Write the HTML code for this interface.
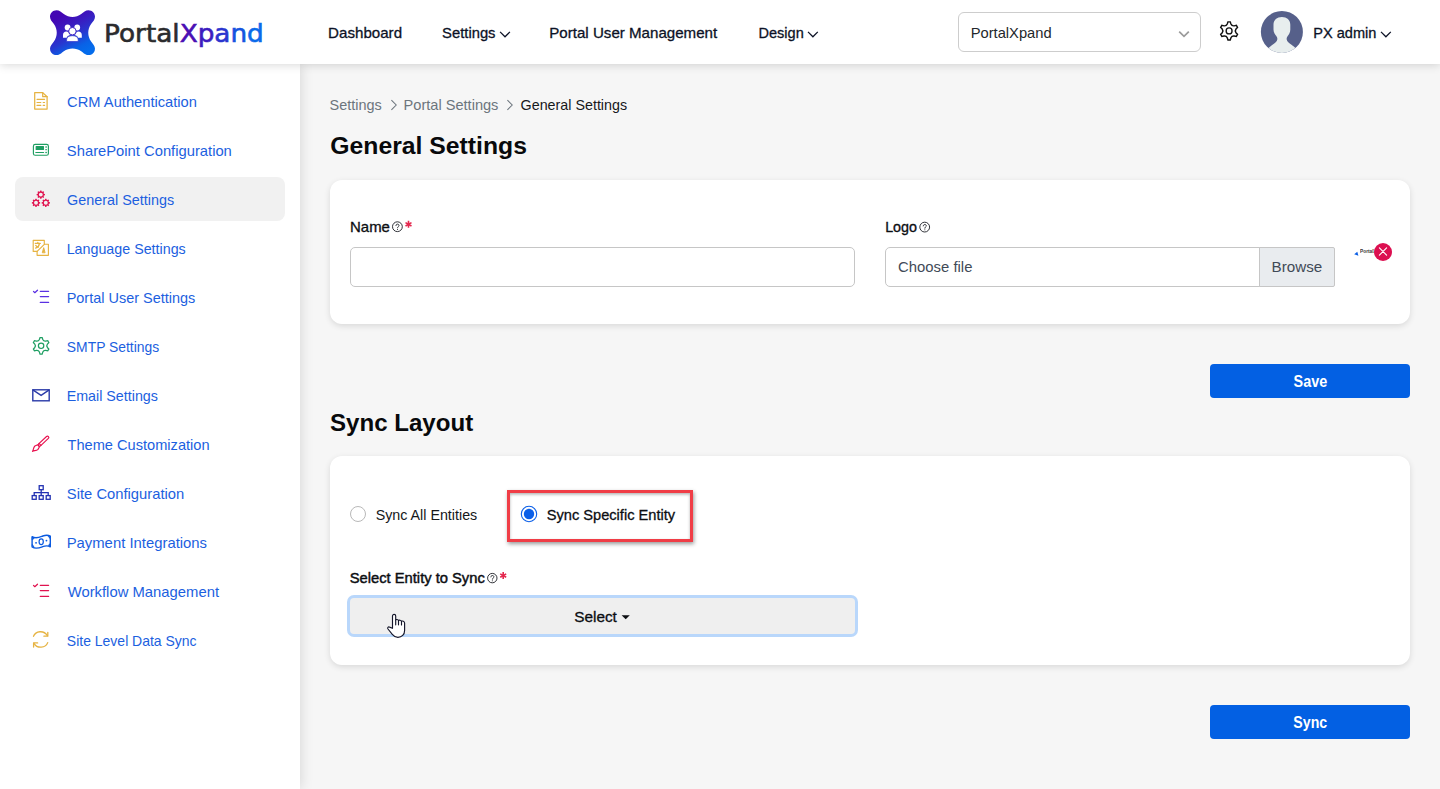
<!DOCTYPE html>
<html lang="en">
<head>
<meta charset="utf-8">
<title>General Settings - PortalXpand</title>
<style>
*{box-sizing:border-box;margin:0;padding:0}
html,body{width:1440px;height:789px;overflow:hidden}
body{font-family:"Liberation Sans","DejaVu Sans",sans-serif;background:#f6f6f6;color:#111;position:relative}
.abs{position:absolute}
.t{position:absolute;white-space:nowrap;line-height:20px;height:20px;transform-origin:0 50%;z-index:10}
#hdr{position:absolute;left:0;top:0;width:1440px;height:64px;background:#fff;box-shadow:0 1px 9px rgba(0,0,0,.16);z-index:5}
#side{position:absolute;left:0;top:64px;width:300px;height:725px;background:#fff;box-shadow:1px 0 12px rgba(0,0,0,.13);z-index:3}
#active{position:absolute;left:15px;top:177px;width:270px;height:44px;background:#f1f1f1;border-radius:8px;z-index:4}
#icons{position:absolute;left:0;top:0;z-index:6}
.card{position:absolute;left:330px;width:1080px;background:#fff;border-radius:12px;box-shadow:0 2px 6px rgba(0,0,0,.12)}
.btn{position:absolute;left:1210px;width:200px;height:34px;background:#0360e3;border-radius:4px}
.inp{position:absolute;height:40px;background:#fff;border:1px solid #c6c6c6;border-radius:5px}
</style>
</head>
<body>

<div id="hdr"></div>
<div id="side"></div>
<div id="active"></div>

<!-- logo mark -->
<svg class="abs" style="left:50px;top:9.600px;z-index:7" width="45" height="45.400" viewBox="0 0 45 45">
  <defs><linearGradient id="lg" x1="0.3" y1="0.1" x2="0.75" y2="0.95"><stop offset="0" stop-color="#4406b3"/><stop offset="0.3" stop-color="#3a1cc0"/><stop offset="0.56" stop-color="#2836cf"/><stop offset="0.82" stop-color="#0962e6"/><stop offset="1" stop-color="#046cec"/></linearGradient></defs>
  <path d="M6.500 0 C9.500 0 11.500 2.200 13.800 3.900 C19 7.700 26 7.700 31.200 3.900 C33.500 2.200 35.500 0 38.500 0 C42.100 0 45 2.900 45 6.500 C45 9.500 42.800 11.500 41.100 13.800 C37.300 19 37.300 26 41.100 31.200 C42.800 33.500 45 35.500 45 38.500 C45 42.100 42.100 45 38.500 45 C35.500 45 33.500 42.800 31.200 41.100 C26 37.300 19 37.300 13.800 41.100 C11.500 42.800 9.500 45 6.500 45 C2.900 45 0 42.100 0 38.500 C0 35.500 2.200 33.500 3.900 31.200 C7.700 26 7.700 19 3.900 13.800 C2.200 11.500 0 9.500 0 6.500 C0 2.900 2.900 0 6.500 0 Z" fill="url(#lg)"/>
  <g fill="#fff">
    <circle cx="17.600" cy="17.300" r="2.900"/><circle cx="27.200" cy="17.300" r="2.900"/>
    <path d="M13 27.600 V24.800 C13 22.700 14.400 21.400 16.300 21.400 C17.100 21.400 17.700 21.600 18.200 21.900 C18.600 23.300 19.300 24.300 20.300 24.900 C18.200 25.300 17.100 26.300 16.700 27.600 Z"/>
    <path d="M31.800 27.600 V24.800 C31.800 22.700 30.400 21.400 28.500 21.400 C27.700 21.400 27.100 21.600 26.600 21.900 C26.200 23.300 25.500 24.300 24.500 24.900 C26.600 25.300 27.700 26.300 28.100 27.600 Z"/>
    <circle cx="22.400" cy="21" r="3.700" stroke="#3a1cc2" stroke-width="0.900"/>
    <path d="M16.600 31.300 V29.600 C16.600 26.900 18.900 25.500 22.400 25.500 C25.900 25.500 28.200 26.900 28.200 29.600 V31.300 Z" stroke="#2d34cc" stroke-width="0.700"/>
  </g>
</svg>
<div class="t" id="logo" style="left:104px;top:15.700px;height:36px;line-height:36px;font-size:25.200px;font-family:'DejaVu Sans','Liberation Sans',sans-serif;color:#2b2b2d;transform:translateX(0.11px) scaleX(1.0435);-webkit-text-stroke:.6px currentColor"><span>Portal</span><span style="color:#4a0fb4">X</span><span style="color:#3d1cc0">p</span><span style="color:#2b35cf">a</span><span style="color:#1554e0">n</span><span style="color:#0a6aea">d</span></div>

<!-- header widgets -->
<svg class="abs" style="left:0;top:0;z-index:7" width="1440" height="64" viewBox="0 0 1440 64">
  <g fill="none" stroke="#0c1226" stroke-width="1.250">
    <path d="M500.100 31.900 L505 36.800 L509.900 31.900"/>
    <path d="M808 31.900 L812.900 36.800 L817.800 31.900"/>
    <path d="M1381 31.900 L1385.900 36.800 L1390.800 31.900"/>
  </g>
  <rect x="958.500" y="12.500" width="242" height="39" rx="5.500" fill="#fff" stroke="#cdcdcd"/>
  <path d="M1179.200 31.600 L1184 36.400 L1188.800 31.600" fill="none" stroke="#9b9b9b" stroke-width="1.700"/>
  <path d="M1227.25 24.00 L1227.95 21.85 L1230.25 21.85 L1230.95 24.00 Q1231.85 26.14 1234.15 25.85 L1236.36 25.38 L1237.51 27.37 L1236.00 29.05 Q1234.60 30.90 1236.00 32.75 L1237.51 34.43 L1236.36 36.42 L1234.15 35.95 Q1231.85 35.66 1230.95 37.80 L1230.25 39.95 L1227.95 39.95 L1227.25 37.80 Q1226.35 35.66 1224.05 35.95 L1221.84 36.42 L1220.69 34.43 L1222.20 32.75 Q1223.60 30.90 1222.20 29.05 L1220.69 27.37 L1221.84 25.38 L1224.05 25.85 Q1226.35 26.14 1227.25 24.00Z" fill="none" stroke="#111" stroke-width="1.450" stroke-linejoin="miter"/>
  <circle cx="1229.100" cy="30.900" r="2.950" fill="none" stroke="#111" stroke-width="1.350"/>
  <defs><clipPath id="av"><circle cx="1281.900" cy="31.900" r="21"/></clipPath></defs>
  <circle cx="1281.900" cy="31.900" r="21" fill="#56608a"/>
  <g clip-path="url(#av)" fill="#e8eeee">
    <path d="M1281.900 16.900 C1277 16.900 1273.500 19.800 1273.500 24.800 V29.500 C1273.500 32.500 1275 34.500 1276.300 36 C1277.300 37.200 1277.500 38.500 1277.300 39.500 C1277 41.500 1275 43 1272.500 44.800 C1270.800 46 1269.500 47 1268 48.500 V56 H1296 V48.500 C1294.500 47 1293.200 46 1291.500 44.800 C1289 43 1287 41.500 1286.700 39.500 C1286.500 38.500 1286.700 37.200 1287.700 36 C1289 34.500 1290.300 32.500 1290.300 29.500 V24.800 C1290.300 19.800 1286.800 16.900 1281.900 16.900 Z"/>
  </g>
</svg>

<!-- sidebar icons -->
<svg id="icons" width="300" height="789" viewBox="0 0 300 789" fill="none" stroke-linecap="round" stroke-linejoin="round">
  <!-- doc -->
  <g stroke="#e6b342" stroke-width="1.250">
    <path d="M34.700 92.600 H42.700 L47.100 96.700 V109.100 H34.700 Z"/><path d="M42.700 92.600 V96.700 H47.100"/>
    <path d="M37 99.300 H44.600 M37 102.500 H40.800 M43.200 102.500 H44.600 M37 105.400 H40.800 M43.200 105.400 H44.600" stroke-width="1.150"/>
  </g>
  <!-- sharepoint -->
  <g stroke="#1e9e62" stroke-width="1.150">
    <rect x="33.400" y="144.400" width="15" height="10.900" rx="1.800"/>
    <rect x="36.200" y="146.600" width="7.200" height="2.800" fill="#1e9e62"/>
    <path d="M35.800 152.500 H43.600"/>
    <path d="M45.900 147 H46.300 M45.900 149.700 H46.300 M45.900 152.500 H46.300" stroke-width="1.300"/>
  </g>
  <!-- gears -->
  <path d="M43.83 193.75 L44.95 194.00 L44.95 195.20 L43.83 195.45 A3.15 3.15 0 0 1 43.55 196.14 L44.16 197.11 L43.31 197.96 L42.34 197.35 A3.15 3.15 0 0 1 41.65 197.63 L41.40 198.75 L40.20 198.75 L39.95 197.63 A3.15 3.15 0 0 1 39.26 197.35 L38.29 197.96 L37.44 197.11 L38.05 196.14 A3.15 3.15 0 0 1 37.77 195.45 L36.65 195.20 L36.65 194.00 L37.77 193.75 A3.15 3.15 0 0 1 38.05 193.06 L37.44 192.09 L38.29 191.24 L39.26 191.85 A3.15 3.15 0 0 1 39.95 191.57 L40.20 190.45 L41.40 190.45 L41.65 191.57 A3.15 3.15 0 0 1 42.34 191.85 L43.31 191.24 L44.16 192.09 L43.55 193.06 A3.15 3.15 0 0 1 43.83 193.75 Z M38.85 194.60 a1.95 1.95 0 1 0 3.90 0 a1.95 1.95 0 1 0 -3.90 0Z M39.03 201.95 L40.15 202.20 L40.15 203.40 L39.03 203.65 A3.15 3.15 0 0 1 38.75 204.34 L39.36 205.31 L38.51 206.16 L37.54 205.55 A3.15 3.15 0 0 1 36.85 205.83 L36.60 206.95 L35.40 206.95 L35.15 205.83 A3.15 3.15 0 0 1 34.46 205.55 L33.49 206.16 L32.64 205.31 L33.25 204.34 A3.15 3.15 0 0 1 32.97 203.65 L31.85 203.40 L31.85 202.20 L32.97 201.95 A3.15 3.15 0 0 1 33.25 201.26 L32.64 200.29 L33.49 199.44 L34.46 200.05 A3.15 3.15 0 0 1 35.15 199.77 L35.40 198.65 L36.60 198.65 L36.85 199.77 A3.15 3.15 0 0 1 37.54 200.05 L38.51 199.44 L39.36 200.29 L38.75 201.26 A3.15 3.15 0 0 1 39.03 201.95 Z M34.05 202.80 a1.95 1.95 0 1 0 3.90 0 a1.95 1.95 0 1 0 -3.90 0Z M48.83 201.95 L49.95 202.20 L49.95 203.40 L48.83 203.65 A3.15 3.15 0 0 1 48.55 204.34 L49.16 205.31 L48.31 206.16 L47.34 205.55 A3.15 3.15 0 0 1 46.65 205.83 L46.40 206.95 L45.20 206.95 L44.95 205.83 A3.15 3.15 0 0 1 44.26 205.55 L43.29 206.16 L42.44 205.31 L43.05 204.34 A3.15 3.15 0 0 1 42.77 203.65 L41.65 203.40 L41.65 202.20 L42.77 201.95 A3.15 3.15 0 0 1 43.05 201.26 L42.44 200.29 L43.29 199.44 L44.26 200.05 A3.15 3.15 0 0 1 44.95 199.77 L45.20 198.65 L46.40 198.65 L46.65 199.77 A3.15 3.15 0 0 1 47.34 200.05 L48.31 199.44 L49.16 200.29 L48.55 201.26 A3.15 3.15 0 0 1 48.83 201.95 Z M43.85 202.80 a1.95 1.95 0 1 0 3.90 0 a1.95 1.95 0 1 0 -3.90 0Z" fill="#e0134f" fill-rule="evenodd" stroke="none"/>
  <!-- language -->
  <g stroke="#e6b342" stroke-width="1.150">
    <path d="M44.300 244 V240.300 H33.200 V251.400 H37.100"/>
    <path d="M44.600 244.200 H48.400 V255.300 H37.100 V251.400 Z"/>
    <path d="M35.300 243.400 H40.300 M37.800 242.300 V243.400 M39.400 243.600 C39.100 246 37.700 247.500 35.600 248.100 M35.700 245.400 C36.300 246.300 37.300 246.900 38.400 247.100" stroke-width="1.250"/>
    <path d="M42.400 252.400 L43.700 247.700 L45 252.400 Z" fill="#e6b342" stroke-width="1"/>
  </g>
  <!-- checklist violet -->
  <g stroke="#5a30e2" stroke-width="1.250">
    <path d="M40.300 291.300 H48.600 M40.300 296.600 H48.600 M40.300 302.400 H48.600"/>
    <path d="M33.500 291.400 L34.800 292.700 L37.500 290.200"/>
  </g>
  <!-- gear green -->
  <path d="M39.40 339.50 L40.05 337.50 L42.15 337.50 L42.80 339.50 Q43.62 341.43 45.71 341.18 L47.76 340.74 L48.81 342.56 L47.41 344.12 Q46.15 345.80 47.41 347.48 L48.81 349.04 L47.76 350.86 L45.71 350.42 Q43.62 350.17 42.80 352.10 L42.15 354.10 L40.05 354.10 L39.40 352.10 Q38.58 350.17 36.49 350.42 L34.44 350.86 L33.39 349.04 L34.79 347.48 Q36.05 345.80 34.79 344.12 L33.39 342.56 L34.44 340.74 L36.49 341.18 Q38.58 341.43 39.40 339.50Z" stroke="#1e9e62" stroke-width="1.250" stroke-linejoin="miter"/>
  <circle cx="41.100" cy="345.800" r="2.700" stroke="#1e9e62" stroke-width="1.200"/>
  <!-- email -->
  <g stroke="#2a3aa8" stroke-width="1.400" stroke-linejoin="miter">
    <rect x="32.800" y="389.800" width="16.400" height="11"/>
    <path d="M33.200 390.200 L41.100 395.300 L48.800 390.200"/>
  </g>
  <!-- brush -->
  <g stroke="#e8104e" stroke-width="1.150" transform="translate(32.500 451.400) rotate(-43)">
    <rect x="8.300" y="-1.350" width="13.500" height="2.700" rx="1.350"/>
    <path d="M10.200 -1.350 V1.350"/>
    <path d="M0 0 C2 -.3 2.800 -2.300 5.400 -2.300 L8.300 -1.350 V1.350 L5.400 2.300 C2.800 2.300 2 .3 0 0 Z"/>
  </g>
  <!-- sitemap -->
  <g stroke="#2231b2" stroke-width="1.300" stroke-linejoin="miter" stroke-linecap="butt">
    <rect x="39.200" y="485.700" width="4" height="4"/>
    <rect x="32.200" y="495.600" width="4" height="3.700"/><rect x="39.200" y="495.600" width="4" height="3.700"/><rect x="46.200" y="495.600" width="4" height="3.700"/>
    <path d="M41.200 489.700 V495.600 M34.200 495.600 V492.600 H48.200 V495.600"/>
  </g>
  <!-- money -->
  <g stroke="#0a5ae0" stroke-width="1.400">
    <path d="M32.100 536.700 C36 539.200 39.500 537.300 42.800 536 C45.800 534.900 48.400 535 50.300 536.200 V546.800 C48.200 545.600 45.600 545.500 42.600 546.700 C39.200 548 35.800 549.400 32.100 547 Z"/>
    <ellipse cx="41.200" cy="541.700" rx="2.100" ry="2.800" stroke-width="1.250"/>
    <path d="M36 542.800 H36.100 M46.400 540.600 H46.500" stroke-width="1.700"/>
    <path d="M32.500 537.500 L34.300 538.300 L32.500 539.600 Z M50 536.800 L48.200 536.300 L50 538.400 Z M32.500 546.300 L34.200 547.300 L32.500 544.700 Z M50 546 L48.400 545.300 L50 543.800Z" fill="#0a5ae0" stroke-width=".8"/>
  </g>
  <!-- checklist crimson -->
  <g stroke="#e0134f" stroke-width="1.250">
    <path d="M40.300 585.300 H48.600 M40.300 590.600 H48.600 M40.300 596.400 H48.600"/>
    <path d="M33.500 585.400 L34.800 586.700 L37.500 584.200"/>
  </g>
  <!-- sync -->
  <g stroke="#e6b342" stroke-width="1.300">
    <path d="M33.500 636.300 C35.600 630.700 44 630 47.400 635.700"/><path d="M47.800 632.300 V636.200 H43.900"/>
    <path d="M47.700 642.600 C45.600 648.300 37.200 648.900 33.900 643.300"/><path d="M33.600 647.100 V642.900 H37.600"/>
  </g>
</svg>

<!-- MAIN -->
<svg class="abs" style="left:0;top:0;z-index:2" width="1440" height="789" viewBox="0 0 1440 789" fill="none">
  <path d="M391.400 100.200 L396.200 105 L391.400 109.800 M507.400 100.200 L512.200 105 L507.400 109.800" stroke="#6c757d" stroke-width="1.050"/>
</svg>

<div class="card" style="top:180px;height:144px"></div>
<div class="inp" style="left:350px;top:247px;width:505px"></div>
<div class="inp" style="left:885px;top:247px;width:450px"></div>
<div class="abs" style="left:1259px;top:247px;width:76px;height:40px;background:#e9ecef;border:1px solid #c6c6c6;border-radius:0 2px 2px 0"></div>

<!-- help icons + asterisks -->
<svg class="abs" style="left:0;top:0;z-index:9" width="1440" height="789" viewBox="0 0 1440 789" fill="none">
  <g stroke="#1a1c22" stroke-width=".9">
    <circle cx="397.400" cy="226.700" r="4.900"/><circle cx="924.700" cy="227.100" r="4.900"/><circle cx="492.300" cy="578.100" r="4.700"/>
  </g>
  <g stroke="#1a1c22" stroke-width=".9" stroke-linecap="round">
    <path d="M395.900 225.500 C395.900 223.600 399 223.600 399 225.500 C399 226.600 397.500 226.600 397.500 227.800 M397.500 229.400 V229.500"/>
    <path d="M923.200 225.900 C923.200 224 926.300 224 926.300 225.900 C926.300 227 924.800 227 924.800 228.200 M924.800 229.800 V229.900"/>
    <path d="M490.800 576.900 C490.800 575 493.900 575 493.900 576.900 C493.900 578 492.400 578 492.400 579.200 M492.400 580.800 V580.900"/>
  </g>
  <g stroke="#e4284e" stroke-width="1.600" stroke-linecap="butt">
    <path d="M408.500 220.800 V227.800 M405.500 222.600 L411.500 226 M411.500 222.600 L405.500 226"/>
    <path d="M503.200 572.100 V579.100 M500.200 573.900 L506.200 577.300 M506.200 573.900 L500.200 577.300"/>
  </g>
  <!-- thumbnail -->
  <path d="M1354.200 254.300 L1357.300 251.800 L1358.400 255.700 Z" fill="#0b5fe6"/>
  <circle cx="1383" cy="252" r="9" fill="#dc0f50"/>
  <path d="M1379.400 247.900 L1386.600 255.100 M1386.600 247.900 L1379.400 255.100" stroke="#fff" stroke-width="1.150" stroke-linecap="round"/>
</svg>
<div class="abs" style="left:1360px;top:249.200px;font-size:4.800px;line-height:6px;color:#3a3a3a;z-index:8;width:14px;overflow:hidden;white-space:nowrap;font-weight:700">PortalXpand</div>

<div class="btn" style="top:364px"></div>

<div class="card" style="top:456px;height:209px"></div>

<!-- radios -->
<div class="abs" style="left:350px;top:506px;width:16px;height:16px;border:1px solid #b9b9b9;border-radius:50%;background:#fff"></div>
<div class="abs" style="left:507px;top:490px;width:186px;height:52px;border:3px solid #f03d46;box-shadow:1px 2px 4px rgba(0,0,0,.4),inset 0 1.500px 3px rgba(0,0,0,.3);background:#fff"></div>
<svg class="abs" style="left:519px;top:504px;z-index:9" width="20" height="20" viewBox="0 0 20 20"><circle cx="10" cy="10" r="7.700" fill="#fff" stroke="#0b5fe8" stroke-width="1.100"/><circle cx="10" cy="10" r="5.200" fill="#0b5fe8"/></svg>

<!-- select button -->
<div class="abs" style="left:347px;top:595px;width:511px;height:42px;border-radius:7px;background:#b9d7fb"></div>
<div class="abs" style="left:350px;top:598px;width:505px;height:36px;border-radius:4px;background:#efefef"></div>
<svg class="abs" style="left:0;top:0;z-index:11" width="1440" height="789" viewBox="0 0 1440 789" fill="none">
  <path d="M621.600 615.200 H629.800 L625.700 619.300 Z" fill="#0c0e12"/>
  <g transform="translate(387 614)" stroke="#14162a" stroke-width="1.150" stroke-linejoin="round" stroke-linecap="round">
    <path d="M5.500 14.300 V2 A1.600 1.600 0 0 1 8.700 2 V6 C9.300 5.300 10.900 5.300 11.500 6.500 C12.200 5.900 13.900 6.100 14.500 7.200 C15.300 6.700 17.500 7 17.600 9 V16.400 C17.600 20.500 14.800 23.400 10.900 23.400 C8.400 23.400 6.800 22.300 5.300 20.400 L1 15 C.1 13.800 1.300 12.500 2.500 13.100 Z" fill="#fff"/>
    <path d="M8.700 6 V10.800 M11.500 6.500 V10.800 M14.500 7.200 V11"/>
  </g>
</svg>

<div class="btn" style="top:705px"></div>

<div class="t" id="nav1" style="left:328px;top:22.60px;font-size:15.0px;font-weight:400;color:#0c1226;transform:translateX(0.11px) scaleX(1.0076);-webkit-text-stroke:.3px #0c1226">Dashboard</div>
<div class="t" id="nav2" style="left:442px;top:22.60px;font-size:15.0px;font-weight:400;color:#0c1226;transform:translateX(0.10px) scaleX(0.9854);-webkit-text-stroke:.3px #0c1226">Settings</div>
<div class="t" id="nav3" style="left:549px;top:22.60px;font-size:15.0px;font-weight:400;color:#0c1226;transform:translateX(0.25px) scaleX(1.0072);-webkit-text-stroke:.3px #0c1226">Portal User Management</div>
<div class="t" id="nav4" style="left:758px;top:22.60px;font-size:15.0px;font-weight:400;color:#0c1226;transform:translateX(0.49px) scaleX(0.9695);-webkit-text-stroke:.3px #0c1226">Design</div>
<div class="t" id="sel" style="left:970px;top:22.80px;font-size:15.0px;font-weight:400;color:#23272b;transform:translateX(0.70px) scaleX(0.9800);">PortalXpand</div>
<div class="t" id="usr" style="left:1313px;top:22.60px;font-size:15.0px;font-weight:400;color:#0c1226;transform:translateX(0.31px) scaleX(0.9694);-webkit-text-stroke:.3px #0c1226">PX admin</div>
<div class="t" id="bc1" style="left:329px;top:94.70px;font-size:15.0px;font-weight:400;color:#6c757d;transform:translateX(0.59px) scaleX(0.9633);">Settings</div>
<div class="t" id="bc2" style="left:403px;top:94.70px;font-size:15.0px;font-weight:400;color:#6c757d;transform:translateX(0.55px) scaleX(0.9722);">Portal Settings</div>
<div class="t" id="bc3" style="left:520px;top:94.70px;font-size:15.0px;font-weight:400;color:#16181b;transform:translateX(0.60px) scaleX(0.9530);">General Settings</div>
<div class="t" id="h1" style="left:330px;top:136.03px;font-size:23.0px;font-weight:700;color:#08090b;transform:translateX(0.36px) scaleX(1.0753);">General Settings</div>
<div class="t" id="lname" style="left:350px;top:216.90px;font-size:15.0px;font-weight:400;color:#0c0e12;transform:translateX(0.08px) scaleX(0.9959);-webkit-text-stroke:.33px #0c0e12">Name</div>
<div class="t" id="llogo" style="left:885px;top:216.90px;font-size:15.0px;font-weight:400;color:#0c0e12;transform:translateX(0.13px) scaleX(0.9555);-webkit-text-stroke:.33px #0c0e12">Logo</div>
<div class="t" id="cf" style="left:898px;top:256.90px;font-size:15.0px;font-weight:400;color:#414a57;transform:translateX(0.10px) scaleX(0.9900);">Choose file</div>
<div class="t" id="br" style="left:1271px;top:257.00px;font-size:15.0px;font-weight:400;color:#414a57;transform:translateX(0.60px) scaleX(1.0124);">Browse</div>
<div class="t" id="save" style="left:1293px;top:371.66px;font-size:16.0px;font-weight:700;color:#ffffff;transform:translateX(0.62px) scaleX(0.8992);">Save</div>
<div class="t" id="h2" style="left:330px;top:412.63px;font-size:23.0px;font-weight:700;color:#08090b;transform:translateX(0.06px) scaleX(1.0465);">Sync Layout</div>
<div class="t" id="r1" style="left:375px;top:504.80px;font-size:15.0px;font-weight:400;color:#15171a;transform:translateX(0.63px) scaleX(0.9519);">Sync All Entities</div>
<div class="t" id="r2" style="left:546px;top:504.80px;font-size:15.0px;font-weight:400;color:#0c0e12;transform:translateX(0.72px) scaleX(0.9746);-webkit-text-stroke:.3px #0c0e12">Sync Specific Entity</div>
<div class="t" id="lsel" style="left:349px;top:567.70px;font-size:15.0px;font-weight:400;color:#0c0e12;transform:translateX(0.80px) scaleX(0.9810);-webkit-text-stroke:.45px #0c0e12">Select Entity to Sync</div>
<div class="t" id="selbtn" style="left:574px;top:607.30px;font-size:15.0px;font-weight:400;color:#0c0e12;transform:translateX(0.22px) scaleX(1.0221);-webkit-text-stroke:.3px #0c0e12">Select</div>
<div class="t" id="sync" style="left:1293px;top:712.66px;font-size:16.0px;font-weight:700;color:#ffffff;transform:translateX(0.31px) scaleX(0.8861);">Sync</div>
<div class="t" id="s0" style="left:67px;top:91.80px;font-size:15.0px;font-weight:400;color:#1c5fe0;transform:translateX(0.08px) scaleX(0.9798);">CRM Authentication</div>
<div class="t" id="s1" style="left:66px;top:140.80px;font-size:15.0px;font-weight:400;color:#1c5fe0;transform:translateX(0.86px) scaleX(0.9843);">SharePoint Configuration</div>
<div class="t" id="s2" style="left:67px;top:189.80px;font-size:15.0px;font-weight:400;color:#1c5fe0;transform:translateX(0.10px) scaleX(0.9575);">General Settings</div>
<div class="t" id="s3" style="left:66px;top:238.80px;font-size:15.0px;font-weight:400;color:#1c5fe0;transform:translateX(0.64px) scaleX(0.9520);">Language Settings</div>
<div class="t" id="s4" style="left:66px;top:287.80px;font-size:15.0px;font-weight:400;color:#1c5fe0;transform:translateX(0.68px) scaleX(0.9639);">Portal User Settings</div>
<div class="t" id="s5" style="left:66px;top:336.80px;font-size:15.0px;font-weight:400;color:#1c5fe0;transform:translateX(0.84px) scaleX(0.9255);">SMTP Settings</div>
<div class="t" id="s6" style="left:66px;top:385.80px;font-size:15.0px;font-weight:400;color:#1c5fe0;transform:translateX(0.64px) scaleX(0.9520);">Email Settings</div>
<div class="t" id="s7" style="left:67px;top:434.80px;font-size:15.0px;font-weight:400;color:#1c5fe0;transform:translateX(0.52px) scaleX(0.9737);">Theme Customization</div>
<div class="t" id="s8" style="left:66px;top:483.80px;font-size:15.0px;font-weight:400;color:#1c5fe0;transform:translateX(0.82px) scaleX(0.9848);">Site Configuration</div>
<div class="t" id="s9" style="left:66px;top:532.80px;font-size:15.0px;font-weight:400;color:#1c5fe0;transform:translateX(0.63px) scaleX(0.9906);">Payment Integrations</div>
<div class="t" id="s10" style="left:67px;top:581.80px;font-size:15.0px;font-weight:400;color:#1c5fe0;transform:translateX(0.66px) scaleX(0.9887);">Workflow Management</div>
<div class="t" id="s11" style="left:66px;top:630.80px;font-size:15.0px;font-weight:400;color:#1c5fe0;transform:translateX(0.84px) scaleX(0.9320);">Site Level Data Sync</div>

</body>
</html>
